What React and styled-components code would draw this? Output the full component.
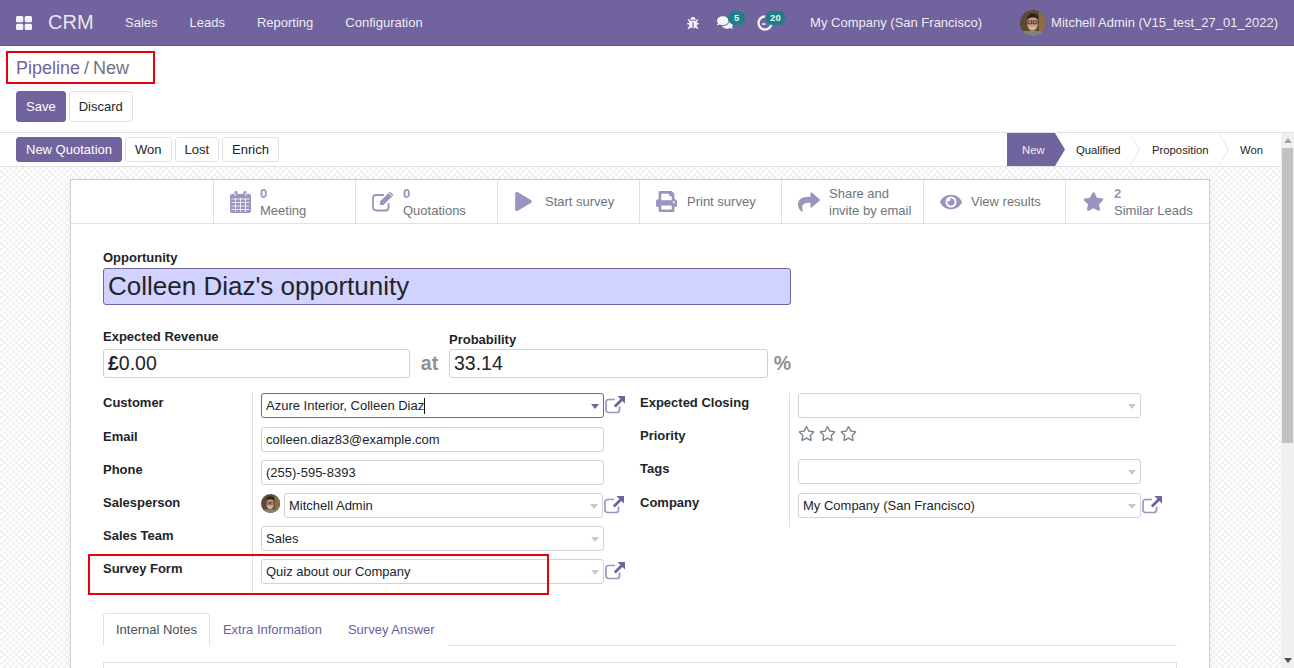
import React from "react";
import styled, { createGlobalStyle } from "styled-components";
import {
  FaBug,
  FaComments,
  FaPlay,
  FaPrint,
  FaShare,
  FaEye,
  FaStar,
  FaRegStar,
} from "react-icons/fa";

const FONT = `"Liberation Sans", Arial, sans-serif`;
const PURPLE = "#71639e";
const ICON = "#9a94bf";

const GlobalStyle = createGlobalStyle`
  html, body {
    margin: 0;
    padding: 0;
    height: 100%;
    overflow: hidden;
  }
  * {
    box-sizing: border-box;
  }
  body {
    font-family: ${FONT};
    font-size: 13px;
    color: #212529;
  }
`;

const AppsIcon = () => (
  <svg width="16" height="14" viewBox="0 0 16 14" fill="#f4f2f9">
    <rect x="0" y="0" width="7.300" height="6.300" rx="1.500" />
    <rect x="8.700" y="0" width="7.300" height="6.300" rx="1.500" />
    <rect x="0" y="7.700" width="7.300" height="6.300" rx="1.500" />
    <rect x="8.700" y="7.700" width="7.300" height="6.300" rx="1.500" />
  </svg>
);

const Avatar = ({ size }) => (
  <svg width={size} height={size} viewBox="0 0 26 26">
    <defs>
      <clipPath id={`av${size}`}>
        <circle cx="13" cy="13" r="13" />
      </clipPath>
    </defs>
    <g clipPath={`url(#av${size})`}>
      <rect width="26" height="26" fill="#5d4a35" />
      <rect x="19" width="7" height="26" fill="#8c6d4a" />
      <rect y="21" width="26" height="5" fill="#7f8478" />
      <ellipse cx="12.500" cy="13" rx="5.500" ry="8" fill="#c79c80" />
      <path d="M7 10c0-4 2-6.500 6-6.500s5.500 2.500 5.500 6.500c-1.500-2-3-2.500-5.500-2.500S8.500 8 7 10z" fill="#2e2119" />
      <rect x="8" y="11" width="3.800" height="2.800" fill="none" stroke="#2c2421" strokeWidth=".8" />
      <rect x="13.200" y="11" width="3.800" height="2.800" fill="none" stroke="#2c2421" strokeWidth=".8" />
      <path d="M10 17.500c1.500 1 3.500 1 5 0" stroke="#f3e5da" strokeWidth="1" fill="none" />
    </g>
  </svg>
);

const ClockIcon = () => (
  <svg width="16" height="16" viewBox="0 0 16 16" fill="none" stroke="#f4f2f9" strokeWidth="2.400">
    <circle cx="8" cy="8" r="6.500" />
    <path d="M8.500 9H5" strokeWidth="1.600" />
  </svg>
);

const CalendarIcon = () => (
  <svg width="21" height="22" viewBox="0 0 21 22" fill={ICON}>
    <path d="M2 3h2V1.800a1.800 1.800 0 0 1 3.600 0V3h5.800V1.800a1.800 1.800 0 0 1 3.600 0V3h2a2 2 0 0 1 2 2v15a2 2 0 0 1-2 2H2a2 2 0 0 1-2-2V5a2 2 0 0 1 2-2z" />
    <path
      d="M1.500 8h18M1.500 11.500h18M1.500 15h18M1.500 18.500h18M5.500 7v14M10.500 7v14M15.500 7v14"
      stroke="#fff"
      strokeWidth=".8"
    />
    <path d="M5 1.500v3.500M16 1.500v3.500" stroke="#fff" strokeWidth="1" />
  </svg>
);

const EditIcon = () => (
  <svg width="22" height="20" viewBox="0 0 22 20" fill="none">
    <path
      d="M16.500 11v4.500a3 3 0 0 1-3 3H4a3 3 0 0 1-3-3V6a3 3 0 0 1 3-3h8"
      stroke={ICON}
      strokeWidth="1.800"
    />
    <path d="M8 9.500 16.500 1 20 4.500 11.500 13H8z" fill={ICON} />
    <path d="M17.500 0 21 3.500" stroke={ICON} strokeWidth="1.400" />
  </svg>
);

const LinkIcon = () => (
  <svg width="20" height="18" viewBox="0 0 20 18" fill="none">
    <path
      d="M14.500 10.500v3.500a2.500 2.500 0 0 1-2.500 2.500H3.500A2.500 2.500 0 0 1 1 14V6a2.500 2.500 0 0 1 2.500-2.500H10"
      stroke={ICON}
      strokeWidth="1.700"
    />
    <path d="M12.500 0H20v7.500l-2.600-2.500-6.600 6.600-2-2L15.400 3z" fill={PURPLE} />
  </svg>
);

const App = () => {
  return (
    <Page>
      <GlobalStyle />
      <Navbar>
        <NavLeft>
          <AppsBtn>
            <AppsIcon />
          </AppsBtn>
          <Brand>CRM</Brand>
          <NavLink>Sales</NavLink>
          <NavLink>Leads</NavLink>
          <NavLink>Reporting</NavLink>
          <NavLink>Configuration</NavLink>
        </NavLeft>
        <NavRight>
          <Systray $size={12} $gap={18}>
            <FaBug size={12} />
          </Systray>
          <Systray $size={16} $gap={24}>
            <FaComments size={17} />
            <Badge $left={11}>5</Badge>
          </Systray>
          <Systray $size={16} $gap={37}>
            <ClockIcon />
            <Badge $left={8}>20</Badge>
          </Systray>
          <CompanyName>My Company (San Francisco)</CompanyName>
          <UserMenu>
            <Avatar size={26} />
            Mitchell Admin (V15_test_27_01_2022)
          </UserMenu>
        </NavRight>
      </Navbar>

      <ControlPanel>
        <Breadcrumb>
          <CrumbLink>Pipeline</CrumbLink>
          <CrumbSep>/</CrumbSep>
          <CrumbCurrent>New</CrumbCurrent>
        </Breadcrumb>
        <ButtonRow>
          <Button $primary $tall>
            Save
          </Button>
          <Button $tall>Discard</Button>
        </ButtonRow>
      </ControlPanel>

      <Body>
        <Main>
          <StatusRow>
            <ButtonRow>
              <Button $primary>New Quotation</Button>
              <Button>Won</Button>
              <Button>Lost</Button>
              <Button>Enrich</Button>
            </ButtonRow>
            <StatusBar>
              <Stage $active $width={48} $pad={15}>New</Stage>
              <Stage $width={75} $pad={21}>Qualified</Stage>
              <Stage $width={89} $pad={22}>Proposition</Stage>
              <Stage $width={62} $pad={21} $last>Won</Stage>
            </StatusBar>
          </StatusRow>

          <FormArea>
            <Sheet>
              <ButtonBox>
                <StatButton>
                  <StatIcon $width={30}><CalendarIcon /></StatIcon>
                  <StatText>
                    <StatValue>0</StatValue>
                    <span>Meeting</span>
                  </StatText>
                </StatButton>
                <StatButton>
                  <StatIcon><EditIcon /></StatIcon>
                  <StatText>
                    <StatValue>0</StatValue>
                    <span>Quotations</span>
                  </StatText>
                </StatButton>
                <StatButton>
                  <StatIcon><FaPlay size={19} /></StatIcon>
                  <StatText>Start survey</StatText>
                </StatButton>
                <StatButton>
                  <StatIcon><FaPrint size={21} /></StatIcon>
                  <StatText>Print survey</StatText>
                </StatButton>
                <StatButton>
                  <StatIcon><FaShare size={22} /></StatIcon>
                  <StatText>
                    <span>Share and</span>
                    <span>invite by email</span>
                  </StatText>
                </StatButton>
                <StatButton>
                  <StatIcon><FaEye size={22} /></StatIcon>
                  <StatText>View results</StatText>
                </StatButton>
                <StatButton>
                  <StatIcon><FaStar size={21} /></StatIcon>
                  <StatText>
                    <StatValue>2</StatValue>
                    <span>Similar Leads</span>
                  </StatText>
                </StatButton>
              </ButtonBox>

              <FormBody>
                <TitleLabel>Opportunity</TitleLabel>
                <TitleField>Colleen Diaz's opportunity</TitleField>

                <RevenueRow>
                  <RevenueCol $width={307} $gap={5}>
                    <SmallLabel>Expected Revenue</SmallLabel>
                    <MoneyField>
                      <b>£</b>0.00
                    </MoneyField>
                  </RevenueCol>
                  <AtText>at</AtText>
                  <RevenueCol $width={319} $gap={2}>
                    <SmallLabel>Probability</SmallLabel>
                    <MoneyField>33.14</MoneyField>
                  </RevenueCol>
                  <PercentText>%</PercentText>
                </RevenueRow>

                <Groups>
                  <Group>
                    <FormRow $tall>
                      <FieldLabel>Customer</FieldLabel>
                      <FieldCell $tall>
                        <Field $focus>
                          <span>Azure Interior, Colleen Diaz</span>
                          <Caret />
                          <Arrow $dark />
                        </Field>
                        <LinkBtn><LinkIcon /></LinkBtn>
                      </FieldCell>
                    </FormRow>
                    <FormRow>
                      <FieldLabel>Email</FieldLabel>
                      <FieldCell>
                        <Field>colleen.diaz83@example.com</Field>
                      </FieldCell>
                    </FormRow>
                    <FormRow>
                      <FieldLabel>Phone</FieldLabel>
                      <FieldCell>
                        <Field>(255)-595-8393</Field>
                      </FieldCell>
                    </FormRow>
                    <FormRow>
                      <FieldLabel>Salesperson</FieldLabel>
                      <FieldCell>
                        <AvatarSlot><Avatar size={19} /></AvatarSlot>
                        <Field $narrow>
                          Mitchell Admin
                          <Arrow />
                        </Field>
                        <LinkBtn><LinkIcon /></LinkBtn>
                      </FieldCell>
                    </FormRow>
                    <FormRow>
                      <FieldLabel>Sales Team</FieldLabel>
                      <FieldCell>
                        <Field>
                          Sales
                          <Arrow />
                        </Field>
                      </FieldCell>
                    </FormRow>
                    <FormRow>
                      <FieldLabel>Survey Form</FieldLabel>
                      <FieldCell $tall>
                        <Field>
                          Quiz about our Company
                          <Arrow />
                        </Field>
                        <LinkBtn><LinkIcon /></LinkBtn>
                      </FieldCell>
                    </FormRow>
                  </Group>

                  <Group>
                    <FormRow>
                      <FieldLabel>Expected Closing</FieldLabel>
                      <FieldCell>
                        <Field><Arrow /></Field>
                      </FieldCell>
                    </FormRow>
                    <FormRow>
                      <FieldLabel>Priority</FieldLabel>
                      <FieldCell>
                        <Stars>
                          <FaRegStar size={17} />
                          <FaRegStar size={17} />
                          <FaRegStar size={17} />
                        </Stars>
                      </FieldCell>
                    </FormRow>
                    <FormRow $tall>
                      <FieldLabel>Tags</FieldLabel>
                      <FieldCell $tall>
                        <Field><Arrow /></Field>
                      </FieldCell>
                    </FormRow>
                    <FormRow>
                      <FieldLabel>Company</FieldLabel>
                      <FieldCell $tall>
                        <Field>
                          My Company (San Francisco)
                          <Arrow />
                        </Field>
                        <LinkBtn><LinkIcon /></LinkBtn>
                      </FieldCell>
                    </FormRow>
                  </Group>
                </Groups>

                <Tabs>
                  <Tab $active>Internal Notes</Tab>
                  <Tab>Extra Information</Tab>
                  <Tab>Survey Answer</Tab>
                </Tabs>
                <NotesBox />
              </FormBody>
            </Sheet>
          </FormArea>
        </Main>

        <ScrollTrack>
          <ScrollArrow $up />
          <ScrollThumb />
          <ScrollArrow />
        </ScrollTrack>
      </Body>

      <Highlight $x={6} $y={51} $w={149} $h={33} />
      <Highlight $x={88} $y={554} $w={461} $h={41} />
    </Page>
  );
};

const Page = styled.div`
  position: relative;
  height: 100vh;
  display: flex;
  flex-direction: column;
  overflow: hidden;
  background: #fff;
`;

const Navbar = styled.div`
  flex: none;
  height: 46px;
  display: flex;
  justify-content: space-between;
  align-items: center;
  background: ${PURPLE};
  border-bottom: 1px solid #5f5387;
  color: rgba(255, 255, 255, 0.9);
  padding: 0 16px;
`;

const NavLeft = styled.div`
  display: flex;
  align-items: center;
`;

const NavRight = styled.div`
  display: flex;
  align-items: center;
`;

const AppsBtn = styled.div`
  display: flex;
  width: 32px;
`;

const Brand = styled.div`
  width: 61px;
  font-size: 20px;
  color: rgba(255, 255, 255, 0.85);
`;

const NavLink = styled.div`
  margin: 0 16px;
`;

const Systray = styled.div`
  position: relative;
  display: flex;
  align-items: center;
  justify-content: center;
  width: ${(p) => p.$size}px;
  height: 16px;
  margin-right: ${(p) => p.$gap}px;
  color: #f4f2f9;
`;

const Badge = styled.span`
  position: absolute;
  top: -4px;
  left: ${(p) => p.$left}px;
  height: 14px;
  min-width: 17px;
  padding: 0 5px;
  border-radius: 7px;
  background: #1f7f86;
  color: #e8f4f4;
  font-size: 9.500px;
  font-weight: 700;
  line-height: 14px;
  text-align: center;
`;

const CompanyName = styled.div`
  margin-right: 38px;
`;

const UserMenu = styled.div`
  display: flex;
  align-items: center;
  gap: 5px;
  svg {
    display: block;
  }
`;

const ControlPanel = styled.div`
  flex: none;
  height: 87px;
  padding: 0 16px;
  border-bottom: 1px solid #dee2e6;
`;

const Breadcrumb = styled.div`
  display: flex;
  align-items: center;
  height: 45px;
  font-size: 18px;
`;

const CrumbLink = styled.span`
  color: ${PURPLE};
`;

const CrumbSep = styled.span`
  margin: 0 4px;
  color: #6c757d;
`;

const CrumbCurrent = styled.span`
  color: #6c757d;
`;

const ButtonRow = styled.div`
  display: flex;
  gap: 3px;
`;

const Button = styled.div`
  display: flex;
  align-items: center;
  height: ${(p) => (p.$tall ? "31px" : "25px")};
  padding: 0 9px;
  border-radius: 3px;
  border: 1px solid ${(p) => (p.$primary ? PURPLE : "#dee2e6")};
  background: ${(p) => (p.$primary ? PURPLE : "#fff")};
  color: ${(p) => (p.$primary ? "#fff" : "#212529")};
  white-space: nowrap;
`;

const Body = styled.div`
  flex: 1;
  min-height: 0;
  display: flex;
`;

const Main = styled.div`
  flex: 1;
  min-width: 0;
  display: flex;
  flex-direction: column;
`;

const StatusRow = styled.div`
  flex: none;
  height: 34px;
  display: flex;
  justify-content: space-between;
  align-items: center;
  padding-left: 16px;
  border-bottom: 1px solid #dee2e6;
`;

const StatusBar = styled.div`
  display: flex;
  align-self: stretch;
`;

const Stage = styled.div`
  position: relative;
  width: ${(p) => p.$width}px;
  display: flex;
  align-items: center;
  padding-left: ${(p) => p.$pad}px;
  font-size: 11.300px;
  background: ${(p) => (p.$active ? PURPLE : "#fff")};
  color: ${(p) => (p.$active ? "#f0eef6" : "#212529")};

  &::after {
    content: "";
    display: ${(p) => (p.$last ? "none" : "block")};
    position: absolute;
    z-index: 1;
    top: 0;
    right: -10px;
    width: 10px;
    height: 33px;
    background: ${(p) => (p.$active ? PURPLE : "#dee2e6")};
    clip-path: polygon(0 0, 100% 50%, 0 100%);
  }

  &::before {
    content: "";
    display: ${(p) => (p.$active || p.$last ? "none" : "block")};
    position: absolute;
    z-index: 2;
    top: 1px;
    right: -9px;
    width: 9px;
    height: 31px;
    background: #fff;
    clip-path: polygon(0 0, 100% 50%, 0 100%);
  }
`;

const FormArea = styled.div`
  flex: 1;
  min-height: 0;
  overflow: hidden;
  padding: 12px 71px 0 70px;
  background-color: #fff;
  background-image: conic-gradient(
    #f2f2f2 25%,
    #fff 0 50%,
    #f2f2f2 0 75%,
    #fff 0
  );
  background-size: 6px 6px;
`;

const Sheet = styled.div`
  width: 1140px;
  height: 600px;
  background: #fff;
  border: 1px solid #c9ccd2;
  box-shadow: 0 2px 8px rgba(0, 0, 0, 0.06);
`;

const ButtonBox = styled.div`
  height: 44px;
  display: flex;
  justify-content: flex-end;
  padding-right: 2px;
  border-bottom: 1px solid #dee2e6;
`;

const StatButton = styled.div`
  width: 142px;
  display: flex;
  align-items: center;
  padding-left: 16px;
  border-left: 1px solid #dee2e6;
  color: #6c757d;

  &:last-child {
    padding-left: 17px;
  }
`;

const StatIcon = styled.div`
  flex: none;
  width: ${(p) => p.$width || 31}px;
  display: flex;
  color: ${ICON};
`;

const StatText = styled.div`
  display: flex;
  flex-direction: column;
  line-height: 17px;
`;

const StatValue = styled.span`
  color: ${ICON};
  font-weight: 700;
`;

const FormBody = styled.div`
  padding: 26px 32px 0;
`;

const SmallLabel = styled.div`
  font-weight: 700;
  line-height: 15px;
`;

const TitleLabel = styled(SmallLabel)`
  height: 18px;
`;

const TitleField = styled.div`
  width: 688px;
  height: 37px;
  display: flex;
  align-items: center;
  padding: 0 4px;
  font-size: 26px;
  background: #d2d2ff;
  border: 1px solid ${PURPLE};
  border-radius: 3px;
`;

const RevenueRow = styled.div`
  display: flex;
  align-items: flex-end;
  margin-top: 24px;
`;

const RevenueCol = styled.div`
  width: ${(p) => p.$width}px;

  ${SmallLabel} {
    margin-bottom: ${(p) => p.$gap}px;
  }
`;

const MoneyField = styled.div`
  height: 29px;
  display: flex;
  align-items: center;
  padding: 0 4px;
  font-size: 19.500px;
  border: 1px solid #ced4da;
  border-radius: 3px;
`;

const AtText = styled.div`
  width: 39px;
  height: 29px;
  line-height: 29px;
  text-align: center;
  font-size: 19.500px;
  font-weight: 700;
  color: #8f8f8f;
`;

const PercentText = styled(AtText)`
  width: 23px;
  text-align: right;
`;

const Groups = styled.div`
  display: flex;
  margin-top: 15px;
`;

const Group = styled.div`
  width: 537px;
`;

const FormRow = styled.div`
  display: flex;
  height: ${(p) => (p.$tall ? "34px" : "33px")};
`;

const FieldLabel = styled.div`
  width: 149px;
  flex: none;
  padding-top: 2px;
  font-weight: 700;
`;

const FieldCell = styled.div`
  display: flex;
  align-items: flex-start;
  height: ${(p) => (p.$tall ? "34px" : "33px")};
  padding-left: 8px;
  border-left: 1px solid #dee2e6;
`;

const Field = styled.div`
  position: relative;
  width: ${(p) => (p.$narrow ? "319px" : "343px")};
  height: 25px;
  display: flex;
  align-items: center;
  padding: 0 4px;
  white-space: nowrap;
  background: #fff;
  border: 1px solid ${(p) => (p.$focus ? PURPLE : "#ced4da")};
  border-radius: 3px;
`;

const Caret = styled.i`
  display: block;
  width: 1px;
  height: 16px;
  background: #111;
`;

const Arrow = styled.i`
  position: absolute;
  right: 4px;
  top: 10px;
  border-top: 5px solid ${(p) => (p.$dark ? PURPLE : "#c8c8c8")};
  border-left: 4px solid transparent;
  border-right: 4px solid transparent;
`;

const LinkBtn = styled.div`
  display: flex;
  margin: 3px 0 0 1px;
`;

const AvatarSlot = styled.div`
  display: flex;
  width: 23px;
  padding-top: 1px;
`;

const Stars = styled.div`
  display: flex;
  gap: 4px;
  margin-top: -1px;
  color: #7c8794;
`;

const Tabs = styled.div`
  display: flex;
  margin-top: 21px;
  height: 33px;
  border-bottom: 1px solid #dee2e6;
`;

const Tab = styled.div`
  height: 33px;
  display: flex;
  align-items: center;
  padding: 0 12px;
  color: ${(p) => (p.$active ? "#495057" : "#6a5f9e")};
  background: #fff;
  border: 1px solid ${(p) => (p.$active ? "#dee2e6" : "transparent")};
  border-bottom-color: ${(p) => (p.$active ? "#fff" : "transparent")};
  border-radius: 3px 3px 0 0;
`;

const NotesBox = styled.div`
  margin-top: 16px;
  height: 40px;
  border: 1px solid #dee2e6;
`;

const ScrollTrack = styled.div`
  flex: none;
  width: 13px;
  display: flex;
  flex-direction: column;
  align-items: center;
  padding: 0 1px;
  background: #f0f0f0;
`;

const ScrollThumb = styled.div`
  width: 11px;
  height: 295px;
  margin-bottom: auto;
  background: #c1c1c1;
`;

const ScrollArrow = styled.i`
  flex: none;
  width: 0;
  height: 0;
  margin: 5px 0;
  border-left: 4px solid transparent;
  border-right: 4px solid transparent;
  border-top: ${(p) => (p.$up ? "0" : "5px solid #505050")};
  border-bottom: ${(p) => (p.$up ? "5px solid #a3a3a3" : "0")};
`;

const Highlight = styled.div`
  position: absolute;
  left: ${(p) => p.$x}px;
  top: ${(p) => p.$y}px;
  width: ${(p) => p.$w}px;
  height: ${(p) => p.$h}px;
  border: 2px solid #e8000b;
  pointer-events: none;
  z-index: 5;
`;

export default App;
